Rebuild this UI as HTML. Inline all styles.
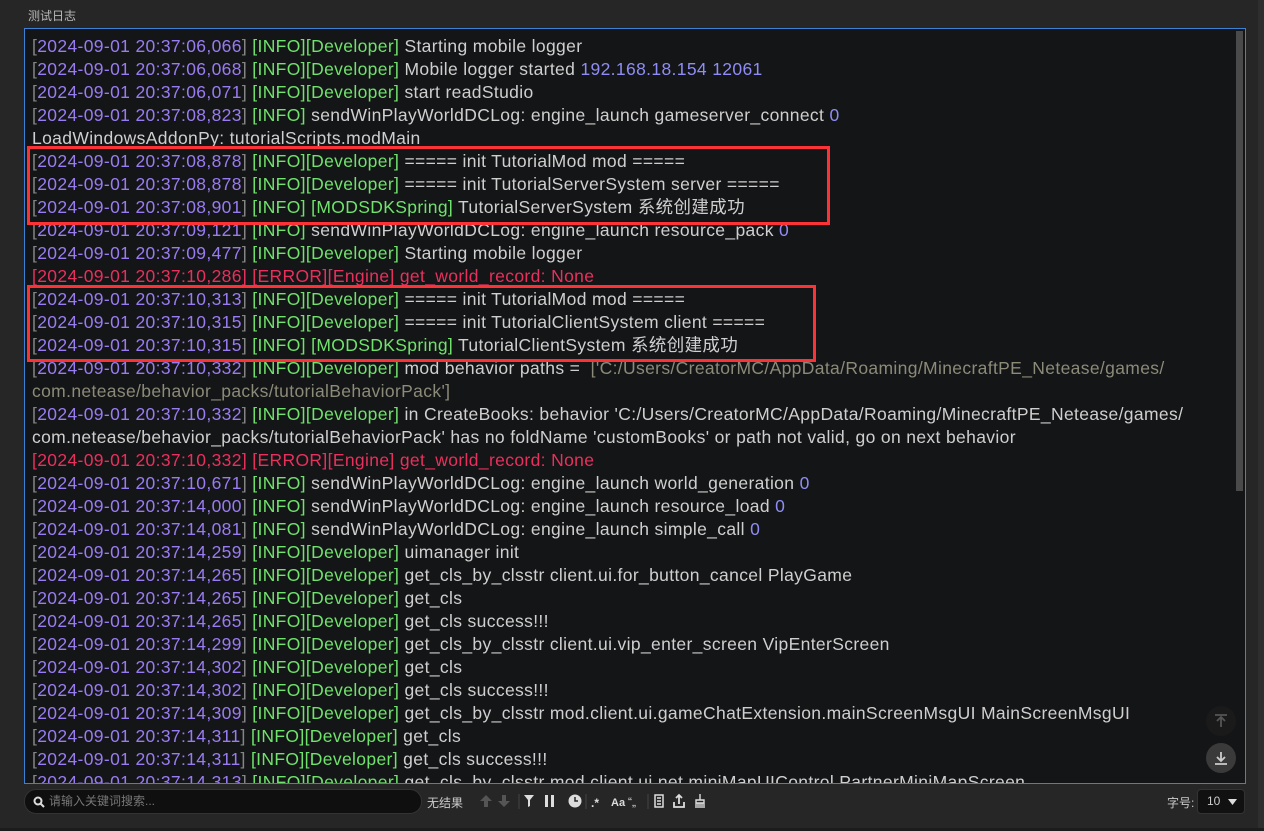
<!DOCTYPE html>
<html><head><meta charset="utf-8"><style>
*{margin:0;padding:0;box-sizing:border-box}
body{width:1264px;height:831px;background:#262627;position:relative;overflow:hidden;font-family:"Liberation Sans","Noto Sans CJK SC",sans-serif}
.rs{position:absolute;right:0;top:0;width:6px;height:831px;background:#2e2e2f}
.bs{position:absolute;left:0;bottom:0;width:1264px;height:3px;background:#1c1c1d}
.title{position:absolute;left:28px;top:7px;font-size:12px;color:#b8b8b8}
.box{position:absolute;left:24px;top:28px;width:1222px;height:756px;border:1px solid #3b82d6;background:#141517;overflow:hidden}
.log{position:absolute;left:7px;top:6px;font-size:17.5px;letter-spacing:0.35px;line-height:23px;color:#cfcfcf;white-space:pre}
.b{color:#858585}.t{color:#9a7cf2}.i{color:#6fe36b}.n{color:#8f8df5}.e{color:#e8305c}.p{color:#8c8a78}
.sb{position:absolute;right:2px;top:2px;width:7px;height:460px;background:#4a4a4a}
.red{position:absolute;border:3px solid #fb3236}
.fab{position:absolute;width:30px;height:30px;border-radius:50%;display:flex;align-items:center;justify-content:center}
.search{position:absolute;left:24px;top:789px;width:398px;height:25px;border-radius:12px;background:#0f0f10;border:1px solid #333;font-size:12px;color:#777;padding-left:24px;line-height:23px}
.tb{position:absolute;top:794px;font-size:12px;color:#ccc}
.sel{position:absolute;left:1197px;top:789px;width:48px;height:25px;border-radius:4px;background:#111;border:1px solid #333;color:#ccc;font-size:12px;padding-left:9px;line-height:23px}
</style></head><body>
<div class="rs"></div><div class="bs"></div>
<div class="title">测试日志</div>
<div class="box">
<div class="log"><span class="b">[</span><span class="t">2024-09-01 20:37:06,066</span><span class="b">]</span> <span class="i">[INFO][Developer]</span> Starting mobile logger
<span class="b">[</span><span class="t">2024-09-01 20:37:06,068</span><span class="b">]</span> <span class="i">[INFO][Developer]</span> Mobile logger started <span class="n">192.168.18.154 12061</span>
<span class="b">[</span><span class="t">2024-09-01 20:37:06,071</span><span class="b">]</span> <span class="i">[INFO][Developer]</span> start readStudio
<span class="b">[</span><span class="t">2024-09-01 20:37:08,823</span><span class="b">]</span> <span class="i">[INFO]</span> sendWinPlayWorldDCLog: engine_launch gameserver_connect <span class="n">0</span>
LoadWindowsAddonPy: tutorialScripts.modMain
<span class="b">[</span><span class="t">2024-09-01 20:37:08,878</span><span class="b">]</span> <span class="i">[INFO][Developer]</span> ===== init TutorialMod mod =====
<span class="b">[</span><span class="t">2024-09-01 20:37:08,878</span><span class="b">]</span> <span class="i">[INFO][Developer]</span> ===== init TutorialServerSystem server =====
<span class="b">[</span><span class="t">2024-09-01 20:37:08,901</span><span class="b">]</span> <span class="i">[INFO] [MODSDKSpring]</span> TutorialServerSystem 系统创建成功
<span class="b">[</span><span class="t">2024-09-01 20:37:09,121</span><span class="b">]</span> <span class="i">[INFO]</span> sendWinPlayWorldDCLog: engine_launch resource_pack <span class="n">0</span>
<span class="b">[</span><span class="t">2024-09-01 20:37:09,477</span><span class="b">]</span> <span class="i">[INFO][Developer]</span> Starting mobile logger
<span class="e">[2024-09-01 20:37:10,286] [ERROR][Engine] get_world_record: None</span>
<span class="b">[</span><span class="t">2024-09-01 20:37:10,313</span><span class="b">]</span> <span class="i">[INFO][Developer]</span> ===== init TutorialMod mod =====
<span class="b">[</span><span class="t">2024-09-01 20:37:10,315</span><span class="b">]</span> <span class="i">[INFO][Developer]</span> ===== init TutorialClientSystem client =====
<span class="b">[</span><span class="t">2024-09-01 20:37:10,315</span><span class="b">]</span> <span class="i">[INFO] [MODSDKSpring]</span> TutorialClientSystem 系统创建成功
<span class="b">[</span><span class="t">2024-09-01 20:37:10,332</span><span class="b">]</span> <span class="i">[INFO][Developer]</span> mod behavior paths =  <span class="p">['C:/Users/CreatorMC/AppData/Roaming/MinecraftPE_Netease/games/</span>
<span class="p">com.netease/behavior_packs/tutorialBehaviorPack']</span>
<span class="b">[</span><span class="t">2024-09-01 20:37:10,332</span><span class="b">]</span> <span class="i">[INFO][Developer]</span> in CreateBooks: behavior 'C:/Users/CreatorMC/AppData/Roaming/MinecraftPE_Netease/games/
com.netease/behavior_packs/tutorialBehaviorPack' has no foldName 'customBooks' or path not valid, go on next behavior
<span class="e">[2024-09-01 20:37:10,332] [ERROR][Engine] get_world_record: None</span>
<span class="b">[</span><span class="t">2024-09-01 20:37:10,671</span><span class="b">]</span> <span class="i">[INFO]</span> sendWinPlayWorldDCLog: engine_launch world_generation <span class="n">0</span>
<span class="b">[</span><span class="t">2024-09-01 20:37:14,000</span><span class="b">]</span> <span class="i">[INFO]</span> sendWinPlayWorldDCLog: engine_launch resource_load <span class="n">0</span>
<span class="b">[</span><span class="t">2024-09-01 20:37:14,081</span><span class="b">]</span> <span class="i">[INFO]</span> sendWinPlayWorldDCLog: engine_launch simple_call <span class="n">0</span>
<span class="b">[</span><span class="t">2024-09-01 20:37:14,259</span><span class="b">]</span> <span class="i">[INFO][Developer]</span> uimanager init
<span class="b">[</span><span class="t">2024-09-01 20:37:14,265</span><span class="b">]</span> <span class="i">[INFO][Developer]</span> get_cls_by_clsstr client.ui.for_button_cancel PlayGame
<span class="b">[</span><span class="t">2024-09-01 20:37:14,265</span><span class="b">]</span> <span class="i">[INFO][Developer]</span> get_cls
<span class="b">[</span><span class="t">2024-09-01 20:37:14,265</span><span class="b">]</span> <span class="i">[INFO][Developer]</span> get_cls success!!!
<span class="b">[</span><span class="t">2024-09-01 20:37:14,299</span><span class="b">]</span> <span class="i">[INFO][Developer]</span> get_cls_by_clsstr client.ui.vip_enter_screen VipEnterScreen
<span class="b">[</span><span class="t">2024-09-01 20:37:14,302</span><span class="b">]</span> <span class="i">[INFO][Developer]</span> get_cls
<span class="b">[</span><span class="t">2024-09-01 20:37:14,302</span><span class="b">]</span> <span class="i">[INFO][Developer]</span> get_cls success!!!
<span class="b">[</span><span class="t">2024-09-01 20:37:14,309</span><span class="b">]</span> <span class="i">[INFO][Developer]</span> get_cls_by_clsstr mod.client.ui.gameChatExtension.mainScreenMsgUI MainScreenMsgUI
<span class="b">[</span><span class="t">2024-09-01 20:37:14,311</span><span class="b">]</span> <span class="i">[INFO][Developer]</span> get_cls
<span class="b">[</span><span class="t">2024-09-01 20:37:14,311</span><span class="b">]</span> <span class="i">[INFO][Developer]</span> get_cls success!!!
<span class="b">[</span><span class="t">2024-09-01 20:37:14,313</span><span class="b">]</span> <span class="i">[INFO][Developer]</span> get_cls_by_clsstr mod.client.ui.net.miniMapUIControl PartnerMiniMapScreen</div>
<div class="sb"></div>
<div class="fab" style="left:1181px;top:677px;background:#1a1a1b"><svg width="16" height="16" viewBox="0 0 16 16"><path d="M2 2h12M8 14V5M4 8l4-4 4 4" stroke="#555" stroke-width="1.8" fill="none"/></svg></div>
<div class="fab" style="left:1181px;top:714px;background:#3a3a3b"><svg width="16" height="16" viewBox="0 0 16 16"><path d="M2 14h12M8 2v9M4 7l4 4 4-4" stroke="#ccc" stroke-width="1.8" fill="none"/></svg></div>
</div>
<div class="red" style="left:27px;top:146px;width:803px;height:79px"></div>
<div class="red" style="left:27px;top:285px;width:789px;height:77px"></div>
<div class="search"><svg style="position:absolute;left:8px;top:6px" width="12" height="12" viewBox="0 0 12 12"><circle cx="5" cy="5" r="3.5" stroke="#ddd" stroke-width="2" fill="none"/><path d="M7.5 7.5L11 11" stroke="#ddd" stroke-width="2"/></svg>请输入关键词搜索...</div>
<div class="tb" style="left:427px">无结果</div>
<svg style="position:absolute;left:478px;top:792px" width="240" height="18" viewBox="0 0 240 18">
<path d="M8 3l6 6h-4v6H6V9H2z" fill="#555"/><path d="M26 15l6-6h-4V3h-4v6h-4z" fill="#555"/>
<line x1="41" y1="2" x2="41" y2="17" stroke="#444"/>
<path d="M46 3h10l-4 5v6l-2 1V8z" fill="#ddd"/>
<rect x="67" y="3" width="3" height="12" fill="#ddd"/><rect x="73" y="3" width="3" height="12" fill="#ddd"/>
<circle cx="97" cy="9" r="6.5" fill="#ddd"/><path d="M97 5v4h3" stroke="#262627" stroke-width="1.5" fill="none"/>
<line x1="108" y1="2" x2="108" y2="17" stroke="#444"/>
<text x="113" y="15" font-size="12" fill="#ddd" font-family="Liberation Sans" font-weight="bold">.*</text>
<text x="133" y="14" font-size="11" fill="#ddd" font-family="Liberation Sans" font-weight="bold">Aa</text>
<text x="150" y="14" font-size="12" fill="#ddd" font-family="Liberation Sans">“„</text>
<line x1="170" y1="2" x2="170" y2="17" stroke="#444"/>
<path d="M177 3h8v12h-8zM179 6h4M179 9h4M179 12h4" stroke="#ddd" stroke-width="1.5" fill="none"/>
<path d="M196 10v5h10v-5M201 12V3M198 6l3-3 3 3" stroke="#ddd" stroke-width="1.8" fill="none"/>
<path d="M222 2v6M218 8h8v3h-8zM218 11v5M220 11v5M222 11v5M224 11v5M226 11v5" stroke="#ddd" stroke-width="1.4" fill="none"/>
</svg>
<div class="tb" style="left:1167px">字号:</div>
<div class="sel">10<svg style="position:absolute;right:7px;top:9px" width="9" height="6"><path d="M0 0h9L4.5 6z" fill="#ddd"/></svg></div>
</body></html>
